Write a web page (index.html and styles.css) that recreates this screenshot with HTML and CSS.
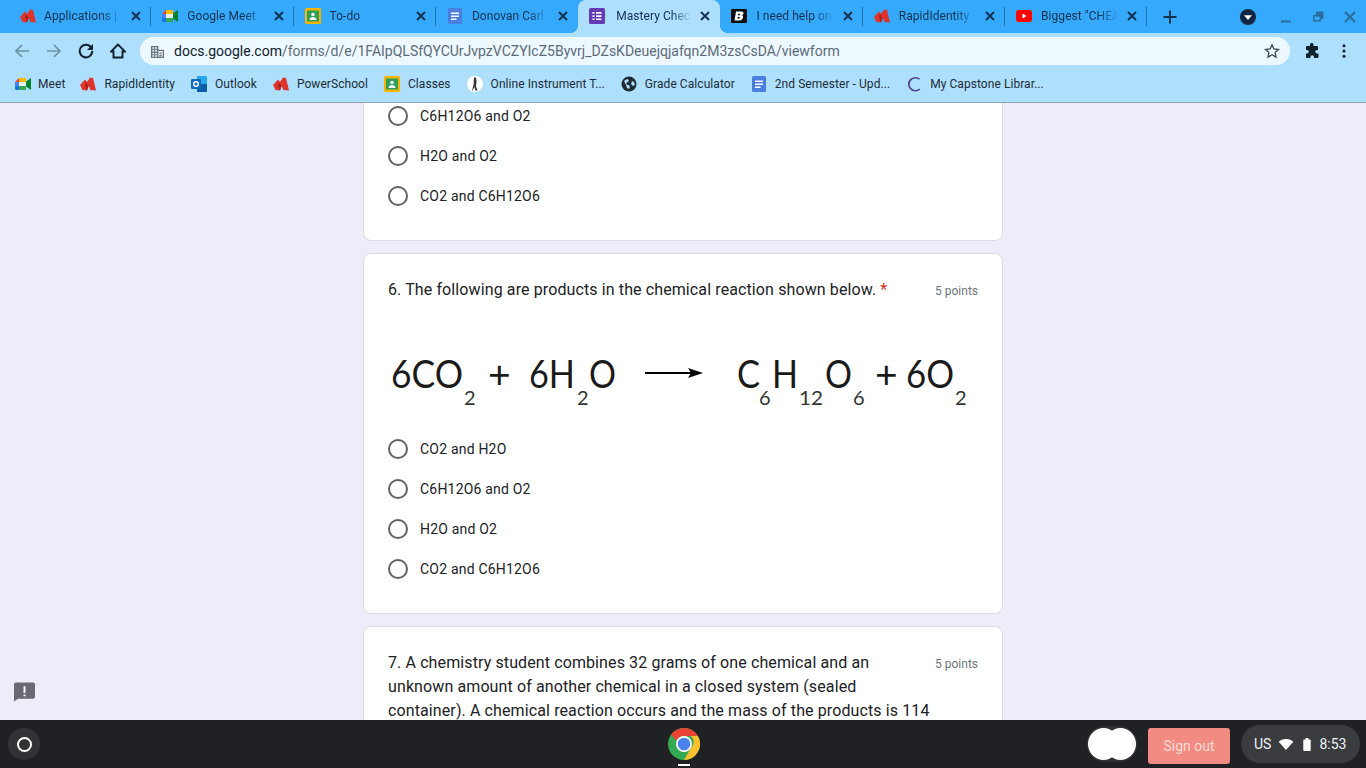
FILE: index.html
```html
<!DOCTYPE html>
<html lang="en">
  <head>
    <meta charset="UTF-8" />
    <title>Mastery Check</title>
    <link rel="stylesheet" href="styles.css">
  </head>
  <body>
    <!-- shared icons -->
    <svg class="defs" width="0" height="0">
      <symbol id="i-rapid" viewBox="0 0 16 16">
        <path fill="#e0332b" d="M0 9 L5 3.500 L7 6 L10 1.500 L13 2 L16 14.500 L10.500 14 L8.500 10 L7 14.500 L2.500 14 Z"/>
        <path fill="#a8201c" d="M6 6 L8.500 10 L7 14.500 L5 9z"/>
      </symbol>
      <symbol id="i-meet" viewBox="0 0 16 16">
        <path fill="#fbbc04" d="M4 2h7v4H4z"/>
        <path fill="#ea4335" d="M4 2v4H0z"/>
        <path fill="#4285f4" d="M0 6h4v4H0z"/>
        <path fill="#1a73e8" d="M0 10h4v4H1.500A1.500 1.500 0 0 1 0 12.500z"/>
        <path fill="#34a853" d="M4 10h7v4H4z"/>
        <path fill="#00832d" d="M11 5.500l5-3.500v12l-5-3.500z"/>
        <path fill="#e8eef0" d="M4 6h7v4H4z"/>
      </symbol>
      <symbol id="i-class" viewBox="0 0 16 16">
        <rect width="16" height="16" rx="1.500" fill="#f4b400"/>
        <rect x="2" y="2.500" width="12" height="11" fill="#2f9e57"/>
        <circle cx="8" cy="6.500" r="1.800" fill="#fff"/>
        <path fill="#fff" d="M4.500 12c0-2 1.600-3 3.500-3s3.500 1 3.500 3z"/>
      </symbol>
      <symbol id="i-docs" viewBox="0 0 16 16">
        <rect x="1" width="14" height="16" rx="1.500" fill="#4a7fe0"/>
        <path fill="#fff" d="M4 4.500h8V6H4zM4 7.500h8V9H4zM4 10.500h5.500V12H4z"/>
      </symbol>
      <symbol id="i-forms" viewBox="0 0 16 16">
        <rect width="16" height="16" rx="1.500" fill="#673ab7"/>
        <path fill="#fff" d="M3.500 4h2v1.700h-2zM7 4h5.500v1.700H7zM3.500 7.200h2v1.700h-2zM7 7.200h5.500v1.700H7zM3.500 10.400h2v1.700h-2zM7 10.400h5.500v1.700H7z"/>
      </symbol>
      <symbol id="i-close" viewBox="0 0 16 16">
        <path d="M4 4l8 8M12 4l-8 8" fill="none" stroke="currentColor" stroke-width="1.900"/>
      </symbol>
    </svg>

    <header class="tabstrip">
      <div class="tab">
        <svg class="fav"><use href="#i-rapid"/></svg>
        <span class="tab-title">Applications |</span>
        <svg class="tab-x"><use href="#i-close"/></svg>
      </div>
      <div class="tab">
        <svg class="fav"><use href="#i-meet"/></svg>
        <span class="tab-title">Google Meet</span>
        <svg class="tab-x"><use href="#i-close"/></svg>
      </div>
      <div class="tab">
        <svg class="fav"><use href="#i-class"/></svg>
        <span class="tab-title">To-do</span>
        <svg class="tab-x"><use href="#i-close"/></svg>
      </div>
      <div class="tab no-sep">
        <svg class="fav"><use href="#i-docs"/></svg>
        <span class="tab-title">Donovan Carl</span>
        <svg class="tab-x"><use href="#i-close"/></svg>
      </div>
      <div class="tab active no-sep">
        <svg class="fav"><use href="#i-forms"/></svg>
        <span class="tab-title">Mastery Check</span>
        <svg class="tab-x"><use href="#i-close"/></svg>
      </div>
      <div class="tab">
        <svg class="fav" viewBox="0 0 16 16">
          <rect y="1" width="16" height="14" rx="1" fill="#0b0b0b"/>
          <path fill="#fff" fill-rule="evenodd" d="M5 3.500h5.500c1.500 0 2.200.8 2 2-.1.900-.7 1.500-1.500 1.800.8.300 1.200 1 1 2-.3 1.800-1.500 3.200-3.500 3.200H3.500zM7.300 5.800l-.3 1.400h1.500c.4 0 .7-.3.700-.7s-.2-.7-.6-.7zM6.700 9l-.3 1.500h1.700c.5 0 .8-.3.800-.8 0-.4-.2-.7-.7-.7z"/>
        </svg>
        <span class="tab-title">I need help on</span>
        <svg class="tab-x"><use href="#i-close"/></svg>
      </div>
      <div class="tab">
        <svg class="fav"><use href="#i-rapid"/></svg>
        <span class="tab-title">RapidIdentity</span>
        <svg class="tab-x"><use href="#i-close"/></svg>
      </div>
      <div class="tab">
        <svg class="fav" viewBox="0 0 16 16">
          <rect y="2" width="16" height="12" rx="3" fill="#f00"/>
          <path fill="#fff" d="M6.500 5.500l4 2.500-4 2.500z"/>
        </svg>
        <span class="tab-title">Biggest "CHEA</span>
        <svg class="tab-x"><use href="#i-close"/></svg>
      </div>
      <svg class="new-tab" viewBox="0 0 16 16">
        <path d="M8 1.500v13M1.500 8h13" fill="none" stroke="currentColor" stroke-width="2"/>
      </svg>
      <svg class="profile" viewBox="0 0 16 16">
        <circle cx="8" cy="8" r="8" fill="#0f2540"/>
        <path fill="#fff" d="M4 6.200h8L8 11z"/>
      </svg>
      <div class="win-btns">
        <svg viewBox="0 0 16 16"><path d="M3 12.500h10" stroke="currentColor" stroke-width="2"/></svg>
        <svg viewBox="0 0 16 16"><path d="M6 2.500h7.500V10H11v2.500H3V6h3zM4.500 7.500v3.500h5V7.500z" fill="currentColor" fill-rule="evenodd"/></svg>
        <svg viewBox="0 0 16 16"><path d="M3 3l10 10M13 3L3 13" stroke="currentColor" stroke-width="2"/></svg>
      </div>
    </header>

    <nav class="toolbar">
      <button class="tool dim">
        <svg viewBox="0 0 16 16"><path d="M15 8H2M8 2L2 8l6 6" fill="none" stroke="currentColor" stroke-width="1.700"/></svg>
      </button>
      <button class="tool dim">
        <svg viewBox="0 0 16 16"><path d="M1 8h13M8 2l6 6-6 6" fill="none" stroke="currentColor" stroke-width="1.700"/></svg>
      </button>
      <button class="tool">
        <svg viewBox="0 0 16 16"><path d="M13.600 5.200A6.300 6.300 0 1 0 14.300 8" fill="none" stroke="currentColor" stroke-width="2"/><path d="M15 1v6H9z" fill="currentColor"/></svg>
      </button>
      <button class="tool">
        <svg viewBox="0 0 16 16"><path d="M8 1.500L1 8.500h2.500v6h9v-6H15z" fill="none" stroke="currentColor" stroke-width="1.900"/></svg>
      </button>
      <div class="omnibox">
        <svg class="site-icon" viewBox="0 0 16 16"><path fill="#6b7680" fill-rule="evenodd" d="M1 2h8v4h6v9H1zM2.500 3.500V5h2V3.500zM5.500 3.500V5h2V3.500zM2.500 6.500V8h2V6.500zM5.500 6.500V8h2V6.500zM2.500 9.500V11h2V9.500zM5.500 9.500V11h2V9.500zM2.500 12v1.500h2V12zM5.500 12v1.500h2V12zM9 7.500v6h4.500v-6zM10 9h2.500v1.500H10zM10 11.500h2.500V13H10z"/></svg>
        <span class="url"><b>docs.google.com</b>/forms/d/e/1FAIpQLSfQYCUrJvpzVCZYIcZ5Byvrj_DZsKDeuejqjafqn2M3zsCsDA/viewform</span>
        <svg class="star" viewBox="0 0 16 16"><path d="M8 1.800l1.900 4.200 4.600.5-3.400 3.100.9 4.500L8 11.800l-4 2.300.9-4.500L1.500 6.500 6.100 6z" fill="none" stroke="#3c4a55" stroke-width="1.300"/></svg>
      </div>
      <button class="tool">
        <svg viewBox="0 0 16 16"><path fill="currentColor" d="M6 1.500a1.800 1.800 0 0 1 3.500 0V3H13a1 1 0 0 1 1 1v3h-1a1.800 1.800 0 0 0 0 3.600h1.500V14a1 1 0 0 1-1 1H10v-1a1.800 1.800 0 0 0-3.600 0v1H3a1 1 0 0 1-1-1v-3.500H3a1.800 1.800 0 0 0 0-3.600H2V4a1 1 0 0 1 1-1h3z"/></svg>
      </button>
      <button class="tool">
        <svg viewBox="0 0 16 16"><circle cx="8" cy="2.800" r="1.500" fill="currentColor"/><circle cx="8" cy="8" r="1.500" fill="currentColor"/><circle cx="8" cy="13.200" r="1.500" fill="currentColor"/></svg>
      </button>
    </nav>

    <div class="bookmarks">
      <a class="mark"><svg class="fav"><use href="#i-meet"/></svg>Meet</a>
      <a class="mark"><svg class="fav"><use href="#i-rapid"/></svg>RapidIdentity</a>
      <a class="mark">
        <svg class="fav" viewBox="0 0 16 16">
          <path fill="#28a8ea" d="M6 0h9a1 1 0 0 1 1 1v14a1 1 0 0 1-1 1H6z"/>
          <path fill="#0a5da8" d="M8 8h8v8H7a1 1 0 0 1-1-1z"/>
          <rect y="3" width="10" height="10" rx="1" fill="#0f6cbd"/>
          <circle cx="5" cy="8" r="2.300" fill="none" stroke="#fff" stroke-width="1.400"/>
        </svg>Outlook
      </a>
      <a class="mark"><svg class="fav"><use href="#i-rapid"/></svg>PowerSchool</a>
      <a class="mark"><svg class="fav"><use href="#i-class"/></svg>Classes</a>
      <a class="mark">
        <svg class="fav" viewBox="0 0 16 16">
          <circle cx="8" cy="8" r="8" fill="#fff"/>
          <path fill="#3a332e" d="M7 1.500h2l.5 4-.5 5 1.500 4H8.500L7.500 11l-2 3.500H5L6.500 9z"/>
        </svg>Online Instrument T...
      </a>
      <a class="mark">
        <svg class="fav" viewBox="0 0 16 16">
          <circle cx="8" cy="8" r="7.500" fill="#1f2a33"/>
          <path fill="#aedefc" d="M3 5l3-2 2 1-1 2-2 1 1 2 2 0 1 2-1 2-2-1-1-3zM11 5l2 1 1 3-2 1-2-2z"/>
        </svg>Grade Calculator
      </a>
      <a class="mark"><svg class="fav"><use href="#i-docs"/></svg>2nd Semester - Upd...</a>
      <a class="mark">
        <svg class="fav" viewBox="0 0 16 16"><path d="M13.500 3.200A6.500 6.500 0 1 0 13.800 13" fill="none" stroke="#4a3f8f" stroke-width="1.700"/></svg>My Capstone Librar...
      </a>
    </div>

    <main class="form">
      <section class="card first">
        <div class="options">
          <label class="opt"><span class="radio"></span>C6H12O6 and O2</label>
          <label class="opt"><span class="radio"></span>H2O and O2</label>
          <label class="opt"><span class="radio"></span>CO2 and C6H12O6</label>
        </div>
      </section>

      <section class="card">
        <div class="q-head">
          <h2 class="q-title">6. The following are products in the chemical reaction shown below. <span class="req">*</span></h2>
          <span class="pts">5 points</span>
        </div>
        <svg class="equation" viewBox="0 0 590 127">
          <text x="3" y="86" textLength="72" lengthAdjust="spacingAndGlyphs">6CO</text>
          <text class="sub" x="76" y="103">2</text>
          <text x="100" y="86">+</text>
          <text x="141" y="86" textLength="46" lengthAdjust="spacingAndGlyphs">6H</text>
          <text class="sub" x="189" y="103">2</text>
          <text x="201" y="86" textLength="27" lengthAdjust="spacingAndGlyphs">O</text>
          <path d="M257 71h52" stroke="#000" stroke-width="2.200"/>
          <path d="M315 71l-15-5 3 5-3 5z"/>
          <text x="349" y="86" textLength="23" lengthAdjust="spacingAndGlyphs">C</text>
          <text class="sub" x="371" y="103">6</text>
          <text x="384" y="86" textLength="26" lengthAdjust="spacingAndGlyphs">H</text>
          <text class="sub" x="411" y="103" textLength="24" lengthAdjust="spacingAndGlyphs">12</text>
          <text x="437" y="86" textLength="27" lengthAdjust="spacingAndGlyphs">O</text>
          <text class="sub" x="465" y="103">6</text>
          <text x="487" y="86">+</text>
          <text x="518" y="86" textLength="48" lengthAdjust="spacingAndGlyphs">6O</text>
          <text class="sub" x="567" y="103">2</text>
        </svg>
        <div class="options">
          <label class="opt"><span class="radio"></span>CO2 and H2O</label>
          <label class="opt"><span class="radio"></span>C6H12O6 and O2</label>
          <label class="opt"><span class="radio"></span>H2O and O2</label>
          <label class="opt"><span class="radio"></span>CO2 and C6H12O6</label>
        </div>
      </section>

      <section class="card">
        <div class="q-head">
          <h2 class="q-title">7. A chemistry student combines 32 grams of one chemical and an unknown amount of another chemical in a closed system (sealed container). A chemical reaction occurs and the mass of the products is 114</h2>
          <span class="pts">5 points</span>
        </div>
      </section>

      <svg class="feedback" viewBox="0 0 22 20">
        <path fill="#6a6870" d="M2 0h18a2 2 0 0 1 2 2v13a2 2 0 0 1-2 2H4l-4 3V2a2 2 0 0 1 2-2z"/>
        <path fill="#fff" d="M10 4h2v7h-2zM10 12.500h2v2h-2z"/>
      </svg>
    </main>

    <footer class="shelf">
      <div class="launcher"><span class="ring"></span></div>
      <div class="shelf-mid">
        <svg class="chrome" viewBox="0 0 32 32">
          <circle cx="16" cy="16" r="16" fill="#34a853"/>
          <path fill="#ea4335" d="M16 0a16 16 0 0 1 13.860 8H16a8 8 0 0 0-7.400 5L3.100 6.500A16 16 0 0 1 16 0z"/>
          <path fill="#fbc02d" d="M29.860 8A16 16 0 0 1 16 32l7-12a8 8 0 0 0 0-12z"/>
          <circle cx="16" cy="16" r="8" fill="#fff"/>
          <circle cx="16" cy="16" r="6.300" fill="#4b83ee"/>
        </svg>
        <span class="dot"></span>
      </div>
      <div class="pod"><span class="blob"></span><span class="blob over"></span></div>
      <button class="signout">Sign out</button>
      <div class="status">
        <span>US</span>
        <svg class="wifi" viewBox="0 0 16 12"><path fill="#fff" d="M0 3a12 12 0 0 1 16 0l-8 9z"/></svg>
        <svg class="batt" viewBox="0 0 8 14"><path fill="#fff" d="M2.500 0h3v1.500H7a1 1 0 0 1 1 1V13a1 1 0 0 1-1 1H1a1 1 0 0 1-1-1V2.500a1 1 0 0 1 1-1h1.500z"/></svg>
        <span>8:53</span>
      </div>
    </footer>
  </body>
</html>
```

FILE: styles.css
```css
* {
  box-sizing: border-box;
}
body {
  display: flex;
  flex-direction: column;
  width: 1366px;
  height: 768px;
  margin: 0;
  overflow: hidden;
  font-family: Roboto, sans-serif;
  background: #f0ebf8;
}
.defs {
  display: none;
}

/* tab strip */
.tabstrip {
  display: flex;
  align-items: center;
  height: 33px;
  padding-left: 9px;
  background: #35a9fb;
  color: #10314d;
  flex: none;
}
.tab {
  position: relative;
  display: flex;
  align-items: center;
  width: 142.3px;
  height: 33px;
  padding: 0 7px 1px 11px;
  font-size: 12px;
  flex: none;
}
.tab::after {
  content: "";
  position: absolute;
  right: 0;
  top: 7px;
  width: 1px;
  height: 19px;
  background: #1f6fa8;
}
.tab.no-sep::after {
  display: none;
}
.tab.active {
  background: #aee0fd;
  border-radius: 8px 8px 0 0;
}
.tab.active::before,
.tab.active::after {
  content: "";
  position: absolute;
  display: block;
  top: auto;
  bottom: 0;
  width: 8px;
  height: 8px;
  background: radial-gradient(circle at 0 0, transparent 8px, #aee0fd 8px);
}
.tab.active::before {
  left: -8px;
}
.tab.active::after {
  right: -8px;
  background: radial-gradient(circle at 100% 0, transparent 8px, #aee0fd 8px);
}
.fav {
  width: 16px;
  height: 16px;
  flex: none;
}
.tab-title {
  flex: 1;
  margin-left: 9px;
  overflow: hidden;
  white-space: nowrap;
  letter-spacing: 0.05px;
  -webkit-mask-image: linear-gradient(to right, #000 70%, transparent 96%);
  mask-image: linear-gradient(to right, #000 70%, transparent 96%);
}
.tab:first-child .tab-title {
  margin-left: 8px;
}
.tab.active .tab-title {
  margin-left: 11px;
}
.tab-x {
  width: 16px;
  height: 16px;
  flex: none;
  margin-left: 2px;
}
.new-tab {
  width: 16px;
  height: 16px;
  margin-left: 15px;
  flex: none;
}
.profile {
  width: 16px;
  height: 16px;
  margin-left: 62px;
  flex: none;
}
.win-btns {
  display: flex;
  gap: 16px;
  margin-left: 22px;
  color: #2a6c9c;
}
.win-btns svg {
  width: 16px;
  height: 16px;
}

/* toolbar */
.toolbar {
  display: flex;
  align-items: center;
  height: 36px;
  padding: 0 6px;
  background: #aee0fd;
  flex: none;
}
.tool {
  display: flex;
  align-items: center;
  justify-content: center;
  width: 32px;
  height: 32px;
  padding: 0;
  border: 0;
  background: none;
  color: #10212e;
  flex: none;
}
.tool.dim {
  color: #6f909f;
}
.tool svg {
  width: 16px;
  height: 16px;
}
.omnibox {
  display: flex;
  align-items: center;
  flex: 1;
  height: 28px;
  margin: 0 6px;
  padding: 0 10px;
  border-radius: 14px;
  background: #edf8ff;
}
.site-icon {
  width: 15px;
  height: 15px;
  flex: none;
}
.url {
  flex: 1;
  margin-left: 9px;
  font-size: 14px;
  color: #5c6b77;
  white-space: nowrap;
}
.url b {
  font-weight: 400;
  color: #10212e;
}
.star {
  width: 16px;
  height: 16px;
  flex: none;
}

/* bookmarks */
.bookmarks {
  display: flex;
  align-items: center;
  gap: 16px;
  height: 34px;
  padding: 0 0 4px 15px;
  background: #aee0fd;
  border-bottom: 1px solid #8fa3b3;
  font-size: 12px;
  letter-spacing: 0.06px;
  color: #1d2b36;
  flex: none;
}
.mark {
  display: flex;
  align-items: center;
  gap: 7px;
  white-space: nowrap;
}
.mark .fav {
  margin-right: 1px;
}
.mark:first-child {
  gap: 6px;
  margin-right: -1px;
}

/* form */
.form {
  position: relative;
  display: flex;
  flex-direction: column;
  align-items: center;
  gap: 12px;
  flex: 1;
  min-height: 0;
  overflow: hidden;
}
.card {
  width: 640px;
  padding: 24px;
  background: #fff;
  border: 1px solid #dadce0;
  border-radius: 8px;
  flex: none;
}
.card.first {
  margin-top: -8px;
  padding-top: 0;
}
.q-head {
  display: flex;
  justify-content: space-between;
}
.q-title {
  width: 545px;
  margin: 0;
  font-size: 16px;
  font-weight: 400;
  line-height: 24px;
  letter-spacing: 0.11px;
  color: #202124;
}
.req {
  color: #d93025;
}
.pts {
  padding-top: 5px;
  font-size: 12px;
  line-height: 16px;
  color: #70757a;
  white-space: nowrap;
}
.equation {
  display: block;
  width: 590px;
  height: 127px;
}
.equation text {
  font-family: Lato, sans-serif;
  font-size: 39px;
  fill: #1a1a1a;
}
.equation text.sub {
  font-size: 20px;
  fill: #333;
}
.opt {
  display: flex;
  align-items: center;
  gap: 12px;
  height: 40px;
  font-size: 14px;
  letter-spacing: 0.2px;
  color: #202124;
}
.radio {
  width: 20px;
  height: 20px;
  border: 2px solid #5f6368;
  border-radius: 50%;
}
.feedback {
  position: absolute;
  left: 14px;
  top: 579px;
  width: 21px;
  height: 20px;
}

/* shelf */
.shelf {
  display: flex;
  align-items: center;
  height: 48px;
  padding: 0 6px 0 8px;
  background: #1f2125;
  flex: none;
}
.launcher {
  display: flex;
  align-items: center;
  justify-content: center;
  width: 32px;
  height: 32px;
  border-radius: 50%;
  background: #303236;
}
.ring {
  width: 15px;
  height: 15px;
  border: 2px solid #fff;
  border-radius: 50%;
}
.shelf-mid {
  position: relative;
  display: flex;
  justify-content: center;
  width: 32px;
  margin-left: 628px;
}
.chrome {
  width: 32px;
  height: 32px;
}
.dot {
  position: absolute;
  left: 10px;
  bottom: -6px;
  width: 12px;
  height: 2px;
  background: #fff;
}
.pod {
  display: flex;
  width: 50px;
  height: 36px;
  margin-left: 387px;
  padding: 2px 1px;
  border-radius: 18px;
  background: #303236;
}
.blob {
  width: 31px;
  height: 32px;
  border-radius: 50%;
  background: #fff;
}
.blob.over {
  margin-left: -14px;
}
.signout {
  width: 82px;
  height: 36px;
  margin: 4px 0 0 11px;
  padding: 0;
  border: 0;
  border-radius: 3px;
  background: #f28b82;
  color: #fbdcd8;
  font-family: Roboto, sans-serif;
  font-size: 14px;
}
.status {
  display: flex;
  align-items: center;
  width: 119px;
  height: 38px;
  margin-left: 11px;
  padding-left: 13px;
  border-radius: 19px;
  background: #3a3c40;
  color: #f1f3f4;
  font-size: 14px;
}
.wifi {
  width: 16px;
  height: 11px;
  margin-left: 7px;
}
.batt {
  width: 8px;
  height: 13px;
  margin-left: 9px;
  margin-right: 8px;
}
```
